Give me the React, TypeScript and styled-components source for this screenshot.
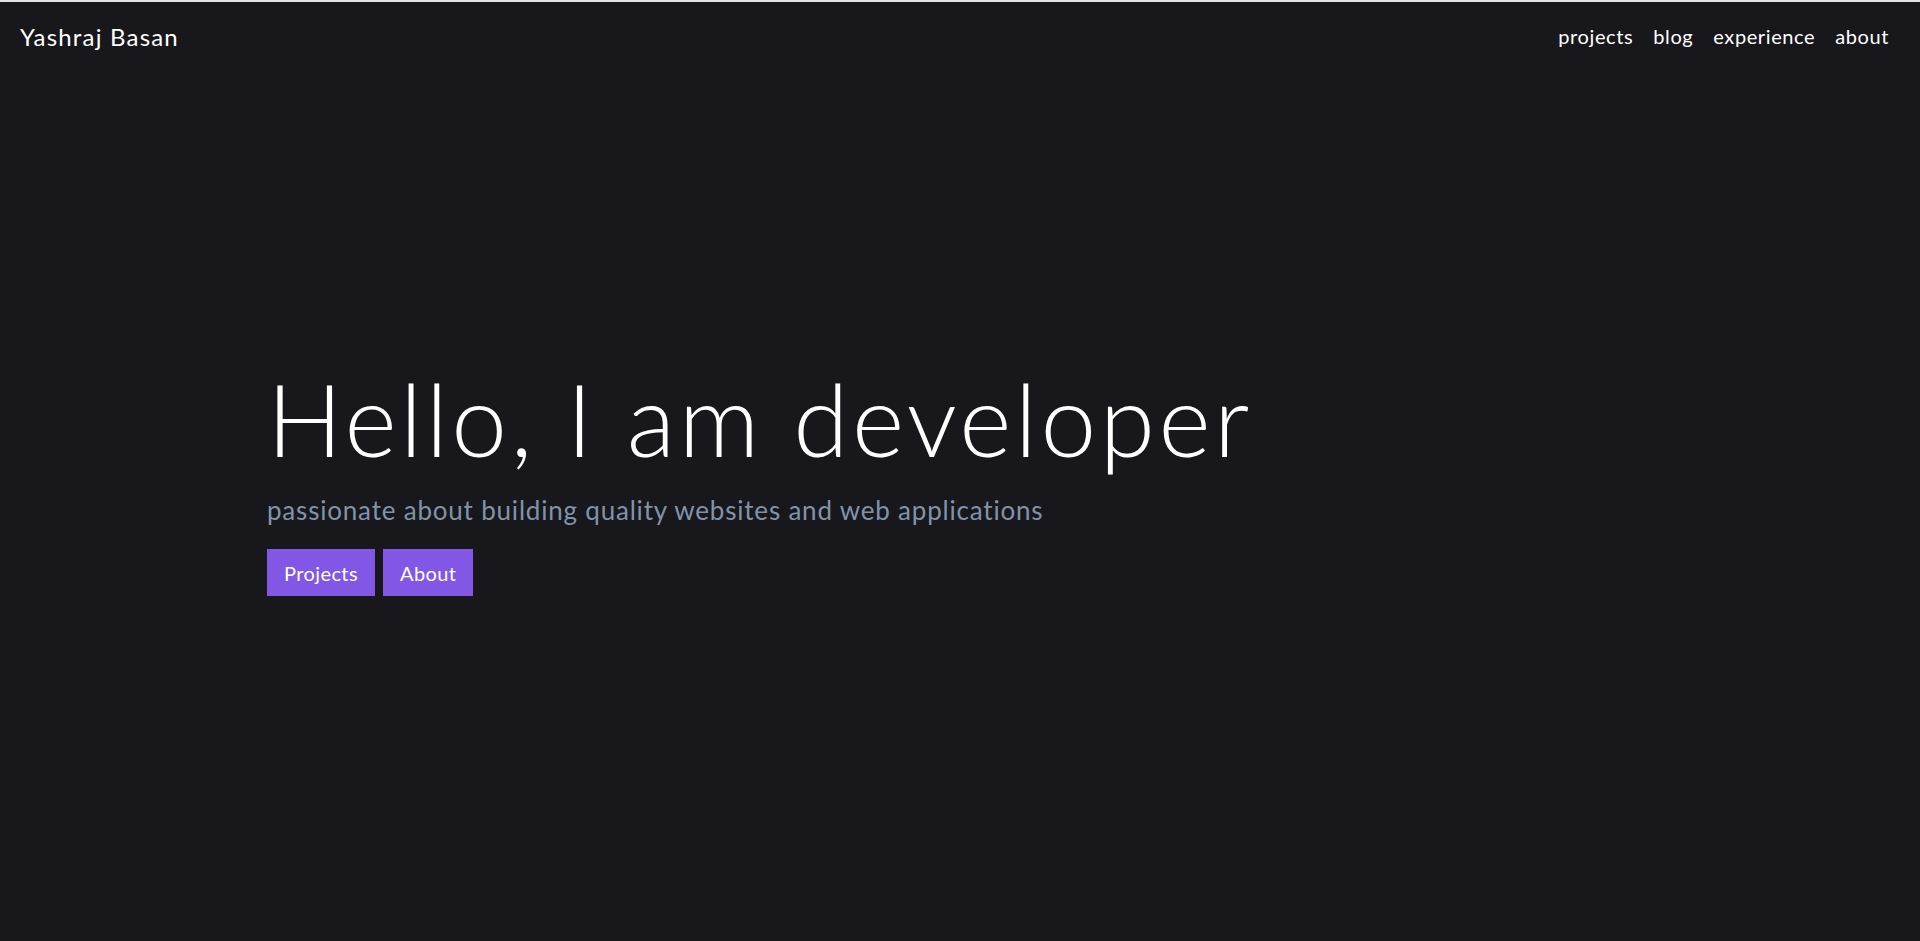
import React from "react";
import styled, { createGlobalStyle } from "styled-components";

const Global = createGlobalStyle`
  html, body { margin: 0; padding: 0; background: #18171c; }
  body { font-family: "Lato", "Open Sans", sans-serif; color: #ffffff; }
  * { box-sizing: border-box; }
`;

const Page = styled.div`
  min-height: 941px;
  border-top: 2px solid #e3e3e6;
  background: #18171c;
  display: flex;
  flex-direction: column;
`;

const Header = styled.header`
  height: 68px;
  display: flex;
  align-items: center;
  justify-content: space-between;
  padding: 0 31px 0 20px;
`;

const Brand = styled.a`
  font-size: 24px;
  font-weight: 400;
  letter-spacing: 1.2px;
  color: #fff;
  text-decoration: none;
`;

const Nav = styled.nav`
  display: flex;
  gap: 20px;
`;

const NavLink = styled.a`
  font-size: 20px;
  letter-spacing: 0.6px;
  color: #fff;
  text-decoration: none;
`;

const Hero = styled.main`
  padding: 288px 0 0 267px;
  display: flex;
  flex-direction: column;
  align-items: flex-start;
`;

const Title = styled.h1`
  margin: 0;
  font-size: 100px;
  font-weight: 300;
  letter-spacing: 3.5px;
  line-height: 1.2;
  color: #fff;
`;

const Subtitle = styled.p`
  margin: 16px 0 0;
  font-size: 26px;
  font-weight: 400;
  letter-spacing: 0.8px;
  color: #7f94ab;
`;

const Buttons = styled.div`
  display: flex;
  gap: 8px;
  margin-top: 23px;
`;

const Button = styled.a`
  display: inline-flex;
  align-items: center;
  height: 47px;
  padding: 0 17px;
  background: #8257e6;
  color: #fff;
  font-size: 20px;
  letter-spacing: 0.4px;
  text-decoration: none;
`;

export default function App() {
  return (
    <>
      <Global />
      <Page>
        <Header>
          <Brand href="#">Yashraj Basan</Brand>
          <Nav>
            <NavLink href="#">projects</NavLink>
            <NavLink href="#">blog</NavLink>
            <NavLink href="#">experience</NavLink>
            <NavLink href="#">about</NavLink>
          </Nav>
        </Header>
        <Hero>
          <Title>Hello, I am developer</Title>
          <Subtitle>passionate about building quality websites and web applications</Subtitle>
          <Buttons>
            <Button href="#">Projects</Button>
            <Button href="#">About</Button>
          </Buttons>
        </Hero>
      </Page>
    </>
  );
}
